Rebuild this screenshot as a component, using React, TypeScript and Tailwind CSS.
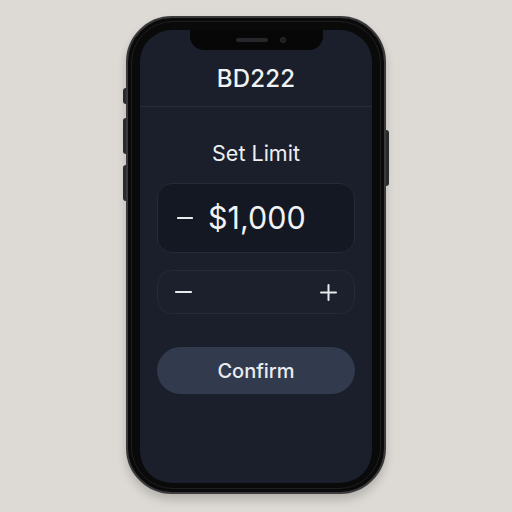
import React from "react";

export default function App() {
  return (
    <div className="w-[512px] h-[512px] bg-[#dddad5] overflow-hidden" style={{ fontFamily: "Inter, 'Noto Sans', sans-serif" }}>
      <div className="relative ml-[126px] mt-[16px] w-[260px] h-[478px] rounded-[46px] bg-[#0a0a0b] border-[2px] border-[#3a3a3c] p-[12px] pb-[9px] shadow-[0_6px_10px_rgba(0,0,0,0.18)]">
        {/* side buttons */}
        <div className="absolute left-[-5px] top-[70px] w-[3px] h-[16px] rounded-l-sm bg-[#2a2a2c]" />
        <div className="absolute left-[-5px] top-[100px] w-[3px] h-[36px] rounded-l-sm bg-[#2a2a2c]" />
        <div className="absolute left-[-5px] top-[147px] w-[3px] h-[36px] rounded-l-sm bg-[#2a2a2c]" />
        <div className="absolute right-[-5px] top-[112px] w-[3px] h-[56px] rounded-r-sm bg-[#2a2a2c]" />
        <div className="absolute inset-[3px] rounded-[42px] border border-[#1e1e20] pointer-events-none" />
        <div className="relative w-full h-full rounded-[32px] bg-[#1a1f2b] overflow-hidden flex flex-col items-center">
          {/* notch */}
          <div className="absolute left-[50px] top-0 w-[133px] h-[20px] bg-[#070708] rounded-b-[14px] flex items-center justify-center gap-[12px]">
            <div className="w-[32px] h-[4px] rounded-full bg-[#26272a] ml-[8px]" />
            <div className="w-[6px] h-[6px] rounded-full bg-[#1a1b22] border border-[#2c2e36]" />
          </div>
          <div className="mt-[35px] h-[28px] flex items-center text-[24px] font-medium text-[#f1f2f4] tracking-[0.2px]">BD222</div>
          <div className="mt-[13px] w-full h-px bg-[#262c38]" />
          <div className="mt-[34px] h-[25px] flex items-center text-[21.5px] text-[#eceef1]">Set Limit</div>
          <div className="w-full px-[17px] mt-[17px]">
            <div className="h-[70px] rounded-[15px] bg-[#141823] border border-[#242a37] flex items-center pl-[19px]">
              <svg width="16" height="4" viewBox="0 0 16 4"><line x1="1" y1="2" x2="15" y2="2" stroke="#e8eaee" strokeWidth="2.2" strokeLinecap="round" /></svg>
              <span className="ml-[15px] text-[30.5px] text-[#f1f2f4] leading-none">$1,000</span>
            </div>
            <div className="mt-[17px] h-[44px] rounded-[15px] bg-[#1b202c] border border-[#252b38] flex items-center justify-between px-[17px]">
              <svg width="17" height="4" viewBox="0 0 17 4"><line x1="1" y1="2" x2="16" y2="2" stroke="#e8eaee" strokeWidth="2.2" strokeLinecap="round" /></svg>
              <svg width="17" height="17" viewBox="0 0 17 17"><line x1="1" y1="8.5" x2="16" y2="8.5" stroke="#e8eaee" strokeWidth="2" strokeLinecap="round" /><line x1="8.5" y1="1" x2="8.5" y2="16" stroke="#e8eaee" strokeWidth="2" strokeLinecap="round" /></svg>
            </div>
            <div className="mt-[33px] h-[47px] rounded-full bg-[#323a4e] flex items-center justify-center text-[20px] font-medium text-[#e9ebef]">Confirm</div>
          </div>
        </div>
      </div>
    </div>
  );
}
